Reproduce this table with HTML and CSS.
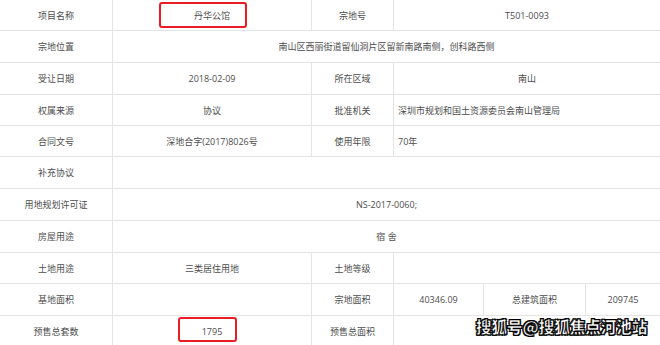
FILE: index.html
```html
<!DOCTYPE html>
<html lang="zh-CN">
<head>
<meta charset="utf-8">
<title>地块信息</title>
<link rel="stylesheet" href="styles.css">
</head>
<body>
<div class="sheet">
  <div class="c">项目名称</div>
  <div class="c v"><span class="mark mark-name"></span>丹华公馆</div>
  <div class="c">宗地号</div>
  <div class="c v span3 end">T501-0093</div>

  <div class="c">宗地位置</div>
  <div class="c v span5 end">南山区西丽街道留仙洞片区留新南路南侧，创科路西侧</div>

  <div class="c">受让日期</div>
  <div class="c v">2018-02-09</div>
  <div class="c">所在区域</div>
  <div class="c v span3 end">南山</div>

  <div class="c">权属来源</div>
  <div class="c v">协议</div>
  <div class="c">批准机关</div>
  <div class="c v span3 end left">深圳市规划和国土资源委员会南山管理局</div>

  <div class="c">合同文号</div>
  <div class="c v">深地合字(2017)8026号</div>
  <div class="c">使用年限</div>
  <div class="c v span3 end left">70年</div>

  <div class="c">补充协议</div>
  <div class="c v span5 end"></div>

  <div class="c">用地规划许可证</div>
  <div class="c v span5 end">NS-2017-0060;</div>

  <div class="c">房屋用途</div>
  <div class="c v span5 end">宿 舍</div>

  <div class="c">土地用途</div>
  <div class="c v">三类居住用地</div>
  <div class="c">土地等级</div>
  <div class="c v span3 end"></div>

  <div class="c">基地面积</div>
  <div class="c v"></div>
  <div class="c">宗地面积</div>
  <div class="c v">40346.09</div>
  <div class="c">总建筑面积</div>
  <div class="c v end">209745</div>

  <div class="c">预售总套数</div>
  <div class="c v"><span class="mark mark-count"></span>1795</div>
  <div class="c">预售总面积</div>
  <div class="c v span3 end"></div>

  <div class="watermark">搜狐号@搜狐焦点河池站</div>
</div>
</body>
</html>
```

FILE: styles.css
```css
html, body {
  margin: 0;
  padding: 0;
  background: #ffffff;
  overflow: hidden;
}

.sheet {
  position: relative;
  width: 660px;
  display: grid;
  grid-template-columns: 113px 199px 82px 90px 102px 74px;
  grid-template-rows: 31px 32px 32px 31px 31px 32px 32px 32px 31px 32px 32px;
  font-family: "Noto Sans CJK SC", "Noto Sans", sans-serif;
  font-size: 9px;
  color: #4d4d4d;
}

.c {
  position: relative;
  box-sizing: border-box;
  border-right: 1px solid #e4e4e4;
  border-bottom: 1px solid #e4e4e4;
  display: flex;
  align-items: center;
  justify-content: center;
  white-space: nowrap;
  line-height: 1;
}

.v {
  font-family: "Open Sans", "Noto Sans CJK SC", sans-serif;
}

.span3 { grid-column: span 3; }
.span5 { grid-column: span 5; }
.end { border-right: none; }

.left {
  justify-content: flex-start;
  padding-left: 4px;
}

.mark {
  position: absolute;
  box-sizing: border-box;
  border: 2px solid #ec1c24;
  border-radius: 3px;
}

.mark-name {
  left: 46px;
  top: 2px;
  width: 88px;
  height: 26px;
}

.mark-count {
  left: 65px;
  top: 1px;
  width: 59px;
  height: 25px;
}

.watermark {
  position: absolute;
  left: 476px;
  top: 315px;
  font-family: "Noto Sans CJK SC", sans-serif;
  font-weight: 900;
  font-size: 15.5px;
  line-height: 22px;
  color: #ffffff;
  -webkit-text-stroke: 0.6px #000000;
  text-shadow: 1px 1px 0 #000, -1px 1px 0 #000, 1px -1px 0 #000, -1px -1px 0 #000;
  letter-spacing: 0px;
}
```
